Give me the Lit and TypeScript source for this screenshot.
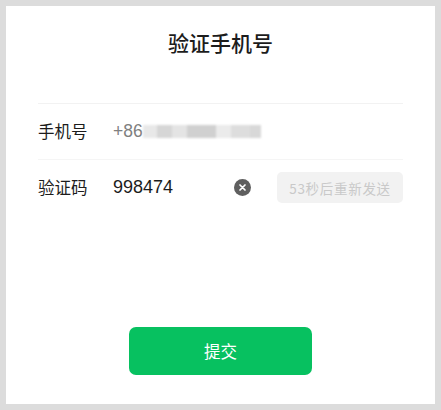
import { LitElement, html, css } from "lit";
import { customElement } from "lit/decorators.js";

@customElement("app-root")
export class AppRoot extends LitElement {
  static styles = css`
    :host {
      display: block;
      width: 441px;
      height: 410px;
      box-sizing: border-box;
      padding: 6px;
      background: #dcdcdc;
      font-family: "Noto Sans CJK SC", "Liberation Sans", sans-serif;
      color: #1c1c1c;
    }
    .card {
      box-sizing: border-box;
      height: 398px;
      background: #fff;
      padding: 0 32px;
      display: flex;
      flex-direction: column;
    }
    .title {
      margin: 21px 0 0;
      height: 30px;
      line-height: 30px;
      font-size: 21px;
      font-weight: 500;
      text-align: center;
    }
    .rows {
      margin-top: 46px;
      border-top: 1px solid #f2f2f2;
    }
    .row {
      display: flex;
      align-items: center;
      height: 55px;
      font-size: 16.5px;
    }
    .row + .row {
      border-top: 1px solid #f5f5f5;
    }
    .label {
      width: 75px;
      flex: none;
      padding-bottom: 2px;
    }
    .num {
      font-family: "Liberation Sans", sans-serif;
    }
    .prefix {
      color: #808080;
      font-size: 17.5px;
      width: 30px;
      flex: none;
    }
    .mask {
      display: flex;
      width: 118px;
      height: 13px;
      filter: blur(0.8px);
    }
    .mask span { height: 100%; }
    .m1 { width: 14px; background: #e8e8e8; }
    .m2 { width: 15px; background: #d6d6d6; }
    .m3 { width: 15px; background: #e4e4e4; }
    .m4 { width: 29px; background: #d0d0d0; }
    .m5 { width: 15px; background: #ebebeb; }
    .m6 { width: 19px; background: #dddddd; }
    .m7 { width: 11px; background: #d8d8d8; }
    .code {
      font-size: 18px;
      width: 121px;
      flex: none;
      color: #1c1c1c;
    }
    .clear {
      display: block;
      width: 17px;
      height: 17px;
      flex: none;
    }
    .resend {
      margin-left: auto;
      width: 126px;
      height: 31px;
      box-sizing: border-box;
      border-radius: 5px;
      background: #f2f2f2;
      color: #c9c9c9;
      font-size: 13.5px;
      letter-spacing: 0.7px;
      display: flex;
      align-items: center;
      justify-content: center;
      white-space: nowrap;
    }
    .spacer { flex: 1; }
    .submit {
      align-self: center;
      width: 183px;
      height: 48px;
      margin-bottom: 29px;
      border: none;
      border-radius: 7px;
      background: #07c160;
      color: #fff;
      font: inherit;
      font-size: 16.5px;
      font-weight: 400;
    }
  `;

  render() {
    return html`
      <div class="card">
        <h1 class="title">验证手机号</h1>
        <div class="rows">
          <div class="row">
            <span class="label">手机号</span>
            <span class="num prefix">+86</span>
            <span class="mask">
              <span class="m1"></span><span class="m2"></span><span class="m3"></span><span class="m4"></span><span class="m5"></span><span class="m6"></span><span class="m7"></span>
            </span>
          </div>
          <div class="row">
            <span class="label">验证码</span>
            <span class="num code">998474</span>
            <svg class="clear" viewBox="0 0 17 17">
              <circle cx="8.5" cy="8.5" r="8.5" fill="#5f5f5f"></circle>
              <path d="M6 6l5 5M11 6l-5 5" stroke="#fff" stroke-width="1.7" stroke-linecap="round"></path>
            </svg>
            <span class="resend">53秒后重新发送</span>
          </div>
        </div>
        <div class="spacer"></div>
        <button class="submit">提交</button>
      </div>
    `;
  }
}
